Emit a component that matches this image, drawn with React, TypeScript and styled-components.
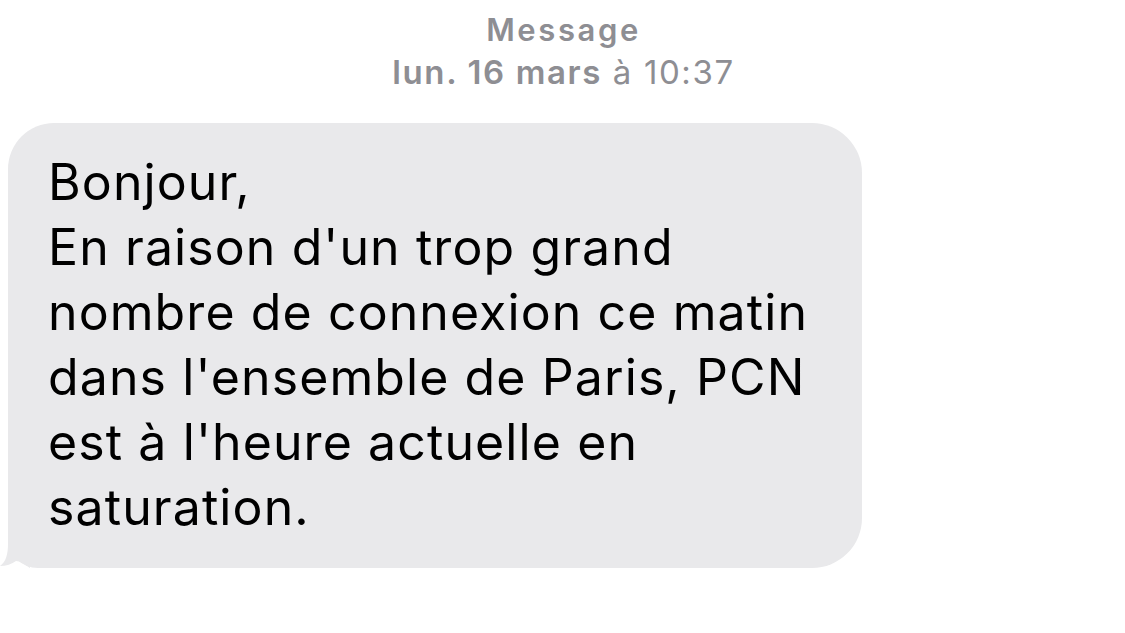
import React from "react";
import styled, { createGlobalStyle } from "styled-components";

const GlobalStyle = createGlobalStyle`
  html, body {
    margin: 0;
    padding: 0;
    background: #ffffff;
  }
  body {
    font-family: Inter, "Noto Sans", "Liberation Sans", sans-serif;
    -webkit-font-smoothing: antialiased;
  }
`;

const Screen = styled("div")({
  width: "1125px",
  height: "633px",
  overflow: "hidden",
  background: "#ffffff",
  display: "flex",
  flexDirection: "column",
});

const Header = styled("div")({
  display: "flex",
  flexDirection: "column",
  alignItems: "center",
  color: "#8e8e93",
  paddingTop: "10px",
  paddingLeft: "2px",
});

const Title = styled("div")({
  fontSize: "31px",
  lineHeight: "39px",
  fontWeight: 600,
  letterSpacing: "2.6px",
});

const Stamp = styled("div")({
  fontSize: "33px",
  lineHeight: "46px",
  fontWeight: 400,
  letterSpacing: "1.6px",
  "& b": {
    fontWeight: 600,
  },
});

const Thread = styled("div")({
  display: "flex",
  paddingTop: "28px",
  paddingLeft: "8px",
});

const Bubble = styled("div")({
  position: "relative",
  width: "854px",
  boxSizing: "border-box",
  background: "#e9e9eb",
  borderRadius: "46px 50px 50px 30px",
  padding: "27px 30px 28px 40px",
  color: "#000000",
  fontSize: "50px",
  lineHeight: "65px",
  letterSpacing: "1.1px",
});

const Tail = styled("svg")({
  position: "absolute",
  left: "-8px",
  bottom: "0",
});

const Line = styled("div")({
  whiteSpace: "nowrap",
});

const lines = [
  "Bonjour,",
  "En raison d'un trop grand",
  "nombre de connexion ce matin",
  "dans l'ensemble de Paris, PCN",
  "est à l'heure actuelle en",
  "saturation.",
];

export default function App() {
  return (
    <>
      <GlobalStyle />
      <Screen>
        <Header>
          <Title>Message</Title>
          <Stamp>
            <b>lun. 16 mars</b> à 10:37
          </Stamp>
        </Header>
        <Thread>
          <Bubble>
            <Tail width="44" height="40" viewBox="0 0 44 40">
              <path
                d="M8 0 L30 0 L30 40 C24 36 20 33 16 33 C12 36 6 38 0 38 C6 34 8 26 8 16 Z"
                fill="#e9e9eb"
              />
            </Tail>
            {lines.map((l, i) => (
              <Line key={i}>{l}</Line>
            ))}
          </Bubble>
        </Thread>
      </Screen>
    </>
  );
}
